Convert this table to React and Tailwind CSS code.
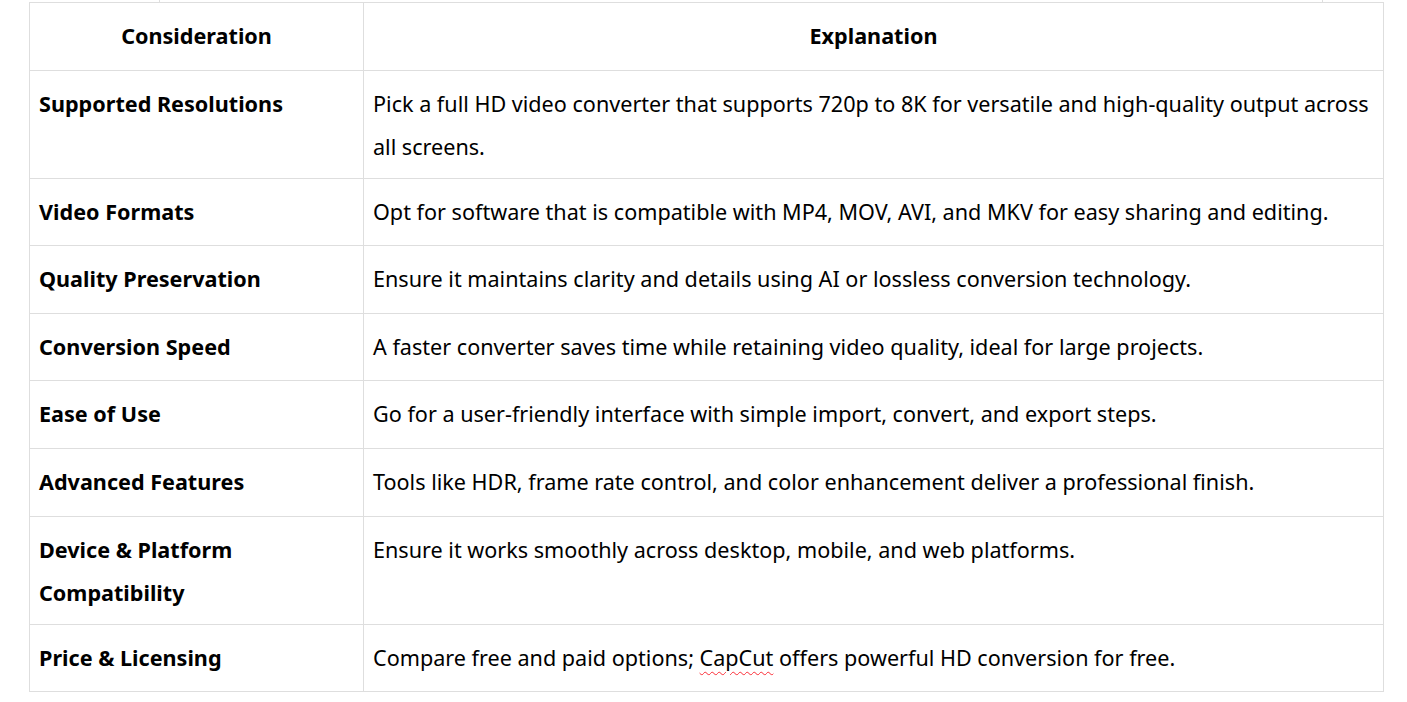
const rows = [
  {
    label: 'Supported Resolutions',
    text: 'Pick a full HD video converter that supports 720p to 8K for versatile and high-quality output across all screens.',
  },
  {
    label: 'Video Formats',
    text: 'Opt for software that is compatible with MP4, MOV, AVI, and MKV for easy sharing and editing.',
  },
  {
    label: 'Quality Preservation',
    text: 'Ensure it maintains clarity and details using AI or lossless conversion technology.',
  },
  {
    label: 'Conversion Speed',
    text: 'A faster converter saves time while retaining video quality, ideal for large projects.',
  },
  {
    label: 'Ease of Use',
    text: 'Go for a user-friendly interface with simple import, convert, and export steps.',
  },
  {
    label: 'Advanced Features',
    text: 'Tools like HDR, frame rate control, and color enhancement deliver a professional finish.',
  },
  {
    label: 'Device & Platform Compatibility',
    text: 'Ensure it works smoothly across desktop, mobile, and web platforms.',
  },
  {
    label: 'Price & Licensing',
    text: (
      <>
        Compare free and paid options;{' '}
        <span className="underline decoration-wavy decoration-red-500 decoration-1 underline-offset-[5px]">CapCut</span>{' '}
        offers powerful HD conversion for free.
      </>
    ),
  },
]

function Cell({ children, className = '' }) {
  return (
    <td className={`border border-[#dedede] px-[9px] pt-[11px] pb-[9px] h-[67.6px] align-top ${className}`}>
      {children}
    </td>
  )
}

function App() {
  return (
    <div className="min-h-screen bg-white font-['Noto_Sans',sans-serif] text-[21.6px] leading-[43.5px] text-black">
      <div className="ml-[159px] h-[2px] w-[1164px] border-x border-[#dedede]" />
      <table className="ml-[29px] w-[1355px] table-fixed border-collapse">
        <colgroup>
          <col className="w-[334px]" />
          <col />
        </colgroup>
        <thead>
          <tr>
            <Cell className="text-center font-bold">Consideration</Cell>
            <Cell className="text-center font-bold">Explanation</Cell>
          </tr>
        </thead>
        <tbody>
          {rows.map((row) => (
            <tr key={row.label}>
              <Cell className="font-bold">{row.label}</Cell>
              <Cell>{row.text}</Cell>
            </tr>
          ))}
        </tbody>
      </table>
    </div>
  )
}

export default App
